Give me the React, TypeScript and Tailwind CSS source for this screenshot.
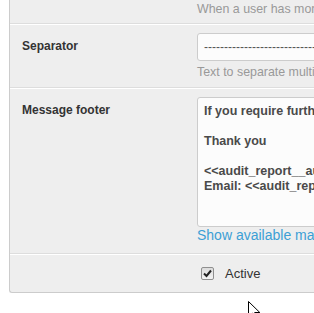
import React from 'react';

const font = { fontFamily: '"Liberation Sans", Arial, sans-serif' };

const Row = ({ label, children, className = '' }: { label?: string; children: React.ReactNode; className?: string }) => (
  <div className={`grid grid-cols-[175px_1fr] pl-[12px] border-t border-white border-b border-b-[#dddddd] ${className}`}>
    <div className="pt-[5px] text-[12px] leading-[17px] font-bold text-[#333333]">{label}</div>
    <div>{children}</div>
  </div>
);

export default function App() {
  return (
    <div className="relative w-[314px] h-[313px] overflow-hidden bg-white" style={font}>
      <div className="pl-[9px]">
        <div className="w-[420px] bg-[#eeeeee] border-l border-b border-[#cccccc] rounded-bl-[3px]">
          {/* first row, cut off above */}
          <div className="grid grid-cols-[175px_1fr] pl-[12px] border-b border-[#dddddd]">
            <div />
            <div className="pt-[1px] pb-[5px] text-[12.4px] leading-[17px] text-[#999999] whitespace-nowrap">
              When a user has more than one audit report to send
            </div>
          </div>

          <Row label="Separator" className="pt-[8px] pb-[6px]">
            <div className="h-[28px] w-[300px] rounded-[3px] border border-[#cccccc] bg-[#fcfcfc] px-[6px] flex items-center text-[12px] text-[#555555] overflow-hidden whitespace-nowrap">
              ------------------------------------------
            </div>
            <div className="mt-[3px] text-[12.4px] leading-[17px] text-[#999999] whitespace-nowrap">
              Text to separate multiple reports
            </div>
          </Row>

          <Row label="Message footer" className="pt-[8px] pb-[10px]">
            <div className="h-[130px] w-[300px] rounded-[3px] border border-[#cccccc] bg-[#fcfcfc] px-[6px] pt-[6px] text-[12.5px] leading-[15px] font-bold text-[#4a4a4a] whitespace-pre overflow-hidden">
              {'If you require further information please contact us.\n\nThank you\n\n<<audit_report__auditor>>\nEmail: <<audit_report__auditor_email>>'}
            </div>
            <div className="text-[14px] leading-[16px] text-[#3c9fd5] whitespace-nowrap">Show available markers</div>
          </Row>

          <div className="grid grid-cols-[175px_1fr] pl-[12px] border-t border-white h-[38px]">
            <div />
            <div className="flex items-center pl-[4px] gap-[11px]">
              <span className="w-[13px] h-[13px] rounded-[2px] border border-[#8f8f8f] bg-gradient-to-b from-[#dcdcdc] to-[#f4f4f4] flex items-center justify-center">
                <svg width="9" height="9" viewBox="0 0 9 9">
                  <path d="M1 4.5 L3.5 7 L8 1.5" stroke="#222" strokeWidth="2" fill="none" />
                </svg>
              </span>
              <span className="text-[13px] text-[#333333]">Active</span>
            </div>
          </div>
        </div>
      </div>

      <svg className="absolute left-[248px] top-[301px]" width="13" height="20" viewBox="0 0 13 20">
        <path d="M0.5 0.5 L0.5 16 L4.5 12.2 L7.2 18.5 L9.3 17.6 L6.7 11.5 L11.8 11.5 Z" fill="#fff" stroke="#000" strokeWidth="1" />
      </svg>
    </div>
  );
}
